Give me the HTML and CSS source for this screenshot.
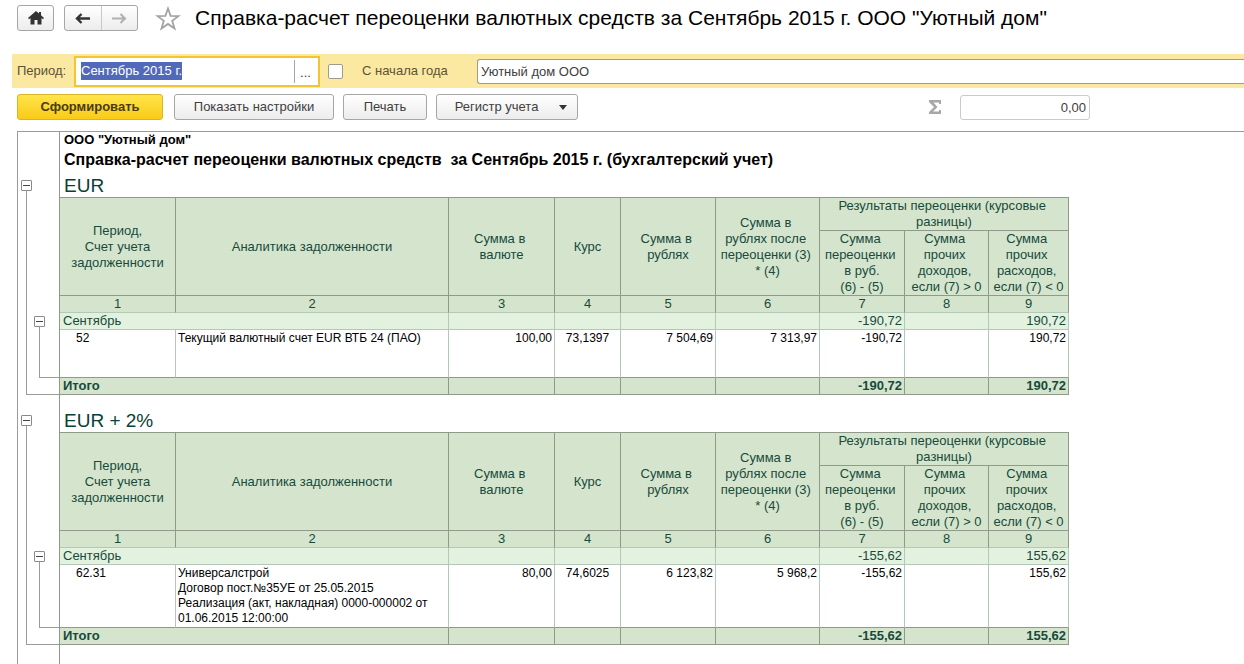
FILE: index.html
```html
<!DOCTYPE html>
<html lang="ru">
<head>
<meta charset="utf-8">
<title>Справка-расчет переоценки валютных средств</title>
<link rel="stylesheet" href="styles.css">
</head>
<body>
<header class="titlebar">
  <button class="btn btn-home" type="button" aria-label="Домой">
    <svg width="16" height="14" viewBox="0 0 16 14"><path fill="#333" d="M8 0 0 7l1 1.300L2.500 7v6.500h4V9h3v4.500h4V7L15 8.300 16 7l-3-2.700V1h-2v1.600z"/></svg>
  </button>
  <div class="nav-pair">
    <button class="nav-btn" type="button" aria-label="Назад">
      <svg width="15" height="11" viewBox="0 0 15 11"><path fill="none" stroke="#333" stroke-width="2.400" d="M15 5.500H2.500M6.500 1 2 5.500 6.500 10"/></svg>
    </button>
    <button class="nav-btn nav-next" type="button" aria-label="Вперед">
      <svg width="15" height="11" viewBox="0 0 15 11"><path fill="none" stroke="#b0b0b0" stroke-width="2" d="M0 5.500h13M8.500 1 13 5.500 8.500 10"/></svg>
    </button>
  </div>
  <button class="star" type="button" aria-label="В избранное">
    <svg width="26" height="25" viewBox="0 0 26 25"><path fill="#fff" stroke="#a3a3a3" stroke-width="1.800" d="m13 2.500 2.600 7.400 7.900.2-6.300 4.700 2.300 7.700-6.500-4.600-6.500 4.600 2.300-7.700-6.300-4.700 7.900-.2z"/></svg>
  </button>
  <h1 class="page-title">Справка-расчет переоценки валютных средств за Сентябрь 2015 г. ООО "Уютный дом"</h1>
</header>

<form class="filters">
  <label class="period-label" for="period">Период:</label>
  <div class="period-field">
    <input class="period-input" id="period" type="text" value="Сентябрь 2015 г." autofocus onfocus="this.select()">
    <button class="period-more" type="button" aria-label="Выбрать период">...</button>
  </div>
  <input class="check" id="from-start" type="checkbox">
  <label class="check-label" for="from-start">С начала года</label>
  <input class="org-input" type="text" value="Уютный дом ООО" aria-label="Организация">
</form>

<div class="toolbar">
  <button class="btn btn-primary" type="button">Сформировать</button>
  <button class="btn btn-settings" type="button">Показать настройки</button>
  <button class="btn btn-print" type="button">Печать</button>
  <button class="btn btn-register" type="button">Регистр учета
    <svg width="8" height="5" viewBox="0 0 8 5"><path fill="#333" d="M0 0h8L4 5z"/></svg>
  </button>
  <div class="total">
    <svg width="12" height="14" viewBox="0 0 12 14"><path fill="#a8a8a8" d="M0 0h12v4h-2V2.500H4.500L8.500 7l-4.500 4.500h6V10h2v4H0v-2l5-5-5-5z"/></svg>
    <input class="total-input" type="text" value="0,00" aria-label="Сумма">
  </div>
</div>

<main class="sheet">
  <div class="row">
    <div class="gutter"></div>
    <div class="content report-head">
      <p class="org">ООО "Уютный дом"</p>
      <h2 class="report-title">Справка-расчет переоценки валютных средств&nbsp; за Сентябрь 2015 г. (бухгалтерский учет)</h2>
    </div>
  </div>

  <section class="row">
    <div class="gutter">
      <button class="toggle" type="button" aria-label="Свернуть EUR"></button>
      <div class="branch branch-outer">
        <button class="toggle" type="button" aria-label="Свернуть Сентябрь"></button>
        <div class="branch branch-inner"></div>
      </div>
    </div>
    <div class="content">
      <h3 class="currency">EUR</h3>
      <table class="report">
        <colgroup><col class="c1"><col class="c2"><col class="c3"><col class="c4"><col class="c5"><col class="c6"><col class="c7"><col class="c8"><col class="c9"></colgroup>
        <thead>
          <tr class="head-top">
            <th rowspan="2">Период,<br>Счет учета задолженности</th>
            <th rowspan="2">Аналитика задолженности</th>
            <th rowspan="2">Сумма в&nbsp;<br>валюте</th>
            <th rowspan="2">Курс</th>
            <th rowspan="2">Сумма в&nbsp;<br>рублях</th>
            <th rowspan="2">Сумма в&nbsp;<br>рублях после&nbsp;<br>переоценки (3)&nbsp;<br>* (4)</th>
            <th colspan="3">Результаты переоценки (курсовые&nbsp;<br>разницы)</th>
          </tr>
          <tr class="head-sub">
            <th>Сумма&nbsp;<br>переоценки&nbsp;<br>в руб.<br>(6) - (5)</th>
            <th>Сумма&nbsp;<br>прочих&nbsp;<br>доходов,&nbsp;<br>если (7) &gt; 0</th>
            <th>Сумма&nbsp;<br>прочих&nbsp;<br>расходов,&nbsp;<br>если (7) &lt; 0</th>
          </tr>
          <tr class="numbers"><th>1</th><th>2</th><th>3</th><th>4</th><th>5</th><th>6</th><th>7</th><th>8</th><th>9</th></tr>
        </thead>
        <tbody>
          <tr class="month"><td colspan="2">Сентябрь</td><td></td><td></td><td></td><td></td><td class="num">-190,72</td><td></td><td class="num">190,72</td></tr>
          <tr class="detail">
            <td class="account">52</td>
            <td>Текущий валютный счет EUR ВТБ 24 (ПАО)</td>
            <td class="num">100,00</td><td class="rate">73,1397</td><td class="num">7 504,69</td><td class="num">7 313,97</td><td class="num">-190,72</td><td></td><td class="num">190,72</td>
          </tr>
        </tbody>
        <tfoot>
          <tr class="sum"><td colspan="2">Итого</td><td></td><td></td><td></td><td></td><td class="num">-190,72</td><td></td><td class="num">190,72</td></tr>
        </tfoot>
      </table>
    </div>
  </section>

  <div class="row spacer"><div class="gutter"></div><div class="content"></div></div>

  <section class="row">
    <div class="gutter">
      <button class="toggle" type="button" aria-label="Свернуть EUR + 2%"></button>
      <div class="branch branch-outer">
        <button class="toggle" type="button" aria-label="Свернуть Сентябрь"></button>
        <div class="branch branch-inner"></div>
      </div>
    </div>
    <div class="content">
      <h3 class="currency">EUR + 2%</h3>
      <table class="report">
        <colgroup><col class="c1"><col class="c2"><col class="c3"><col class="c4"><col class="c5"><col class="c6"><col class="c7"><col class="c8"><col class="c9"></colgroup>
        <thead>
          <tr class="head-top">
            <th rowspan="2">Период,<br>Счет учета задолженности</th>
            <th rowspan="2">Аналитика задолженности</th>
            <th rowspan="2">Сумма в&nbsp;<br>валюте</th>
            <th rowspan="2">Курс</th>
            <th rowspan="2">Сумма в&nbsp;<br>рублях</th>
            <th rowspan="2">Сумма в&nbsp;<br>рублях после&nbsp;<br>переоценки (3)&nbsp;<br>* (4)</th>
            <th colspan="3">Результаты переоценки (курсовые&nbsp;<br>разницы)</th>
          </tr>
          <tr class="head-sub">
            <th>Сумма&nbsp;<br>переоценки&nbsp;<br>в руб.<br>(6) - (5)</th>
            <th>Сумма&nbsp;<br>прочих&nbsp;<br>доходов,&nbsp;<br>если (7) &gt; 0</th>
            <th>Сумма&nbsp;<br>прочих&nbsp;<br>расходов,&nbsp;<br>если (7) &lt; 0</th>
          </tr>
          <tr class="numbers"><th>1</th><th>2</th><th>3</th><th>4</th><th>5</th><th>6</th><th>7</th><th>8</th><th>9</th></tr>
        </thead>
        <tbody>
          <tr class="month"><td colspan="2">Сентябрь</td><td></td><td></td><td></td><td></td><td class="num">-155,62</td><td></td><td class="num">155,62</td></tr>
          <tr class="detail">
            <td class="account">62.31</td>
            <td>Универсалстрой<br>Договор пост.№35УЕ от 25.05.2015<br>Реализация (акт, накладная) 0000-000002 от<br>01.06.2015 12:00:00</td>
            <td class="num">80,00</td><td class="rate">74,6025</td><td class="num">6 123,82</td><td class="num">5 968,2</td><td class="num">-155,62</td><td></td><td class="num">155,62</td>
          </tr>
        </tbody>
        <tfoot>
          <tr class="sum"><td colspan="2">Итого</td><td></td><td></td><td></td><td></td><td class="num">-155,62</td><td></td><td class="num">155,62</td></tr>
        </tfoot>
      </table>
    </div>
  </section>

  <div class="row rest"><div class="gutter"></div><div class="content"></div></div>
</main>
</body>
</html>
```
FILE: styles.css
```css
* { box-sizing: border-box; }

body {
  margin: 0;
  min-height: 100vh;
  display: flex;
  flex-direction: column;
  background: #fff;
  color: #404040;
  font: 13px/16px "Liberation Sans", Arial, sans-serif;
}

button, input { font: inherit; color: inherit; margin: 0; }
h1, h2, h3, p { margin: 0; }
svg { display: block; flex: none; }

.titlebar {
  display: flex;
  align-items: center;
  height: 40px;
  margin-bottom: 14px;
  padding: 0 0 4px 17px;
}

.btn {
  display: flex;
  align-items: center;
  justify-content: center;
  height: 26px;
  padding: 0;
  flex: none;
  border: 1px solid #a6a6a6;
  border-radius: 3px;
  background: linear-gradient(#fff, #ececec);
}
.btn-home { width: 37px; margin-right: 10px; }

.nav-pair {
  display: flex;
  flex: none;
  width: 74px;
  height: 26px;
  border: 1px solid #a6a6a6;
  border-radius: 3px;
  background: linear-gradient(#fff, #ececec);
}
.nav-btn {
  display: flex;
  align-items: center;
  justify-content: center;
  flex: 1;
  padding: 0;
  border: 0;
  background: none;
}
.nav-next { border-left: 1px solid #c8c8c8; }

.star {
  margin: 0 14px 0 17px;
  padding: 0;
  border: 0;
  background: none;
}
.page-title {
  color: #000;
  font-size: 21px;
  line-height: 24px;
  font-weight: normal;
  white-space: nowrap;
}

.filters {
  display: flex;
  align-items: center;
  height: 34px;
  margin-left: 12px;
  padding-left: 5px;
  background: #fbe9a1;
}
.period-label { width: 57px; color: #5c5235; }
.period-field {
  display: flex;
  flex: none;
  width: 246px;
  height: 31px;
  padding: 2px;
  border: 2px solid #f2c531;
  background: #fff;
}
.period-input {
  flex: 1;
  min-width: 0;
  padding: 0 3px;
  border: 0;
  outline: 0;
  line-height: 18px;
  background: #fff;
}
.period-input::selection { background: #5069b8; color: #fff; }
.period-more {
  width: 22px;
  padding: 3px 0 0;
  border: 0;
  border-left: 1px solid #a6a6a6;
  background: #fff;
}
.check {
  appearance: none;
  flex: none;
  width: 15px;
  height: 15px;
  margin: 0 19px 0 8px;
  border: 1px solid #a09c8c;
  border-radius: 2px;
  background: #fff;
}
.check-label { width: 115px; color: #5c5235; }
.org-input {
  flex: 1;
  min-width: 0;
  height: 25px;
  padding: 0 3px;
  border: 1px solid #a09c8c;
  border-right: 0;
  border-radius: 3px 0 0 3px;
  background: #fff;
}

.toolbar {
  display: flex;
  align-items: center;
  height: 43px;
  padding: 0 0 5px 17px;
}
.btn-primary {
  width: 146px;
  margin-right: 11px;
  border-color: #d9b525;
  background: linear-gradient(#ffe44a, #f9cb18);
  color: #4a3c10;
  font-weight: bold;
}
.btn-settings { width: 160px; margin-right: 9px; }
.btn-print { width: 84px; margin-right: 9px; }
.btn-register { width: 142px; padding-left: 8px; gap: 21px; }
.total {
  display: flex;
  align-items: center;
  gap: 19px;
  margin-left: 351px;
}
.total-input {
  width: 130px;
  height: 25px;
  padding: 0 3px;
  border: 1px solid #c9c9cf;
  border-radius: 3px;
  text-align: right;
}

.sheet {
  display: flex;
  flex-direction: column;
  flex: 1;
  margin-left: 17px;
  border: solid #9b9b9b;
  border-width: 1px 0 0 1px;
}
.row { display: flex; }
.gutter {
  display: flex;
  flex-direction: column;
  flex: none;
  width: 41px;
  padding: 4px 0 0 3px;
}
.content { flex: 1; border-left: 1px solid #8f9a8a; }
.spacer { height: 16px; }
.rest { flex: 1; }

.report-head { height: 44px; padding-left: 4px; color: #000; }
.org { font-weight: bold; }
.report-title { padding-top: 2px; font-size: 16px; line-height: 20px; }
.currency {
  height: 21px;
  padding-left: 4px;
  color: #0b4036;
  font-size: 19px;
  line-height: 20px;
  font-weight: normal;
}

.toggle {
  width: 11px;
  height: 11px;
  flex: none;
  padding: 0;
  border: 1px solid #8a8a8a;
  border-radius: 1px;
  background: linear-gradient(#444, #444) center / 7px 1px no-repeat #fff;
}
.branch {
  flex: 1;
  margin-left: 5px;
  border: solid #9b9b9b;
  border-width: 0 0 1px 1px;
}
.branch-outer {
  display: flex;
  flex-direction: column;
  padding: 125px 0 16px 7px;
}

.report {
  width: 1009px;
  table-layout: fixed;
  border-collapse: separate;
  border-spacing: 0;
  border-top: 1px solid #8f9a8a;
  color: #174a3c;
}
.c1 { width: 116px; }
.c2 { width: 273px; }
.c3 { width: 106px; }
.c4 { width: 66px; }
.c5 { width: 95px; }
.c6 { width: 104px; }
.c7 { width: 85px; }
.c8 { width: 84px; }
.c9 { width: 80px; }

.report th, .report td {
  padding: 0;
  border: solid #8f9a8a;
  border-width: 0 1px 1px 0;
  white-space: nowrap;
}
.report th { background: #d5e5cd; font-weight: normal; }
.report th:first-child[rowspan] { white-space: normal; }
.report td { padding: 0 2px 0 3px; }
.report .num { text-align: right; }
.head-top { height: 33px; }
.head-sub { height: 65px; }
.numbers, .month, .sum { height: 17px; }
.report .month td { background: #e3f1df; border-color: #b3c8b6; }
.report .numbers th { border-bottom-color: #b3c8b6; }
.detail { height: 48px; color: #000; font-size: 12px; line-height: 15px; }
.report .detail td {
  padding: 1px 2px;
  border-right-color: #b3c8b6;
  vertical-align: top;
}
.report .detail .account { padding-left: 16px; }
.report .detail .rate { text-align: center; }
.report .sum td { background: #d5e5cd; font-weight: bold; }
```
